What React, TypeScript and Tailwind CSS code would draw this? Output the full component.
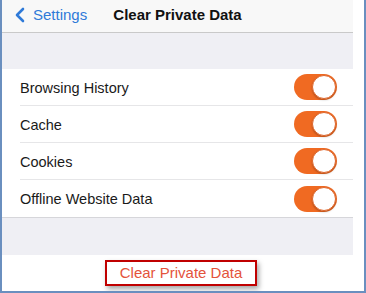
import { ChevronLeft } from 'lucide-react';

const rows = ['Browsing History', 'Cache', 'Cookies', 'Offline Website Data'];

function Toggle() {
  return (
    <div className="w-[43px] h-[26px] rounded-full bg-[#f06a22] flex items-center justify-end pr-[1px]">
      <div className="w-[24px] h-[24px] rounded-full bg-white border border-[#e0662a] shadow-[0_1px_2px_rgba(0,0,0,0.25)]" />
    </div>
  );
}

export default function App() {
  return (
    <div className="w-[366px] h-[293px] bg-white border-l-2 border-r-2 border-b-2 border-[#6a8fbf] flex font-['Liberation_Sans',Arial,sans-serif] overflow-hidden">
      <div className="w-[351px] flex flex-col">
        {/* nav bar */}
        <div className="h-[33px] bg-[#f8f8f8] border-b border-[#c9c9c9] flex items-center relative shrink-0">
          <div className="flex items-center text-[#2f7ad8] text-[15px] pl-[6px] -mt-[2px]">
            <ChevronLeft size={24} strokeWidth={2.6} className="-mr-[1px]" />
            <span className="ml-[2px]">Settings</span>
          </div>
          <div className="absolute inset-0 -top-[2px] flex items-center justify-center text-[15px] font-bold text-[#111] pointer-events-none">
            Clear Private Data
          </div>
        </div>

        <div className="h-[36px] bg-[#efeff4] shrink-0" />

        <div className="bg-white border-b border-[#d6d6da] shrink-0">
          {rows.map((r, i) => (
            <div key={r} className="h-[37px] flex items-center pl-[18px]">
              <div
                className={`flex-1 h-full flex items-center pr-[16px] ${
                  i < rows.length - 1 ? 'border-b border-[#e6e6e8]' : ''
                }`}
              >
                <span className="flex-1 text-[14.5px] text-[#1a1a1a] pt-[3px]">{r}</span>
                <Toggle />
              </div>
            </div>
          ))}
        </div>

        <div className="h-[37px] bg-[#efeff4] shrink-0" />

        <div className="flex-1 bg-white flex justify-center pt-[5px]">
          <div className="w-[152px] h-[26px] border-2 border-[#c00000] flex items-center justify-center text-[15px] text-[#e4533b] shadow-[2px_3px_5px_rgba(0,0,0,0.35)] ml-[7px]">
            Clear Private Data
          </div>
        </div>
      </div>
    </div>
  );
}
